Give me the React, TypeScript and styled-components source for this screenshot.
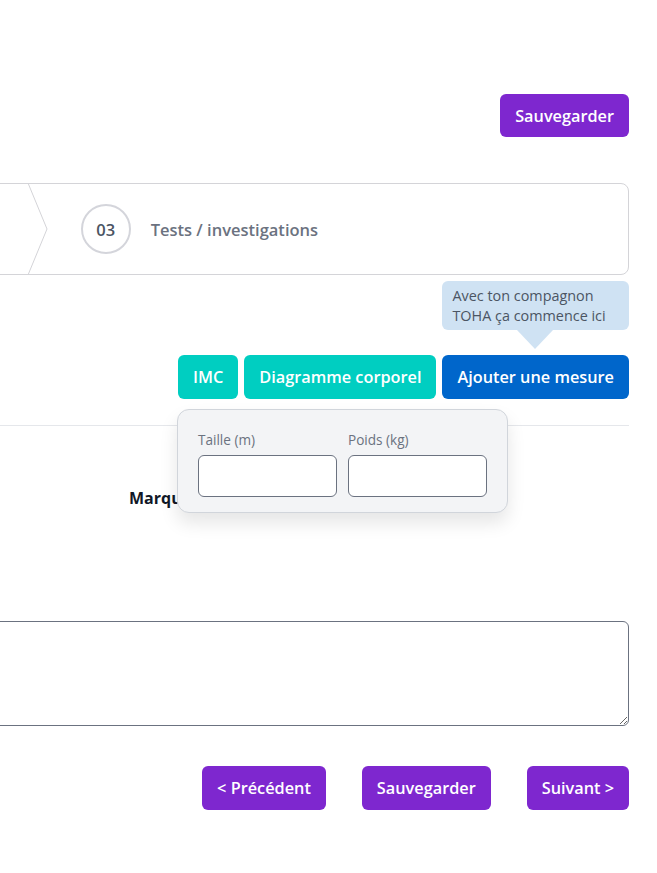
import React from "react";
import styled, { createGlobalStyle } from "styled-components";

const Global = createGlobalStyle`
  html, body { margin: 0; padding: 0; background: #ffffff; }
  body { font-family: "Open Sans", "Noto Sans", sans-serif; color: #111827; overflow: hidden; }
  * { box-sizing: border-box; }
`;

const Viewport = styled.div`
  display: flex;
  justify-content: flex-end;
  padding-right: 28px;
  overflow: hidden;
  min-height: 873px;
`;

const Content = styled.div`
  flex: 0 0 1803px;
  width: 1803px;
  display: flex;
  flex-direction: column;
`;

type Variant = "purple" | "teal" | "blue";

const colors: Record<Variant, string> = {
  purple: "#7e27cf",
  teal: "#00cec1",
  blue: "#0066cb",
};

const Button = styled.button<{ $variant: Variant }>`
  height: 44px;
  padding: 0 15px;
  border: none;
  border-radius: 6px;
  background: ${(p) => colors[p.$variant]};
  color: #ffffff;
  font-family: inherit;
  font-size: 16.3px;
  font-weight: 600;
  white-space: nowrap;
  cursor: pointer;
`;

const TopBar = styled.div`
  display: flex;
  justify-content: flex-end;
  padding-top: 94px;
  ${Button} { height: 43px; }
`;

const Stepper = styled.div`
  margin-top: 46px;
  height: 92px;
  display: flex;
  border: 1px solid #d4d4d8;
  border-radius: 8px;
  overflow: hidden;
`;

const Step = styled.div`
  flex: 1;
  display: flex;
  align-items: center;
`;

const Chevron = styled.svg`
  align-self: stretch;
  width: 20px;
  flex: none;
`;

const StepCircle = styled.div`
  width: 50px;
  height: 50px;
  flex: none;
  margin-left: 33px;
  border: 2px solid #d4d5db;
  border-radius: 50%;
  display: flex;
  align-items: center;
  justify-content: center;
  font-size: 16.5px;
  font-weight: 600;
  color: #4b5563;
`;

const StepLabel = styled.span`
  margin-left: 20px;
  font-size: 16.5px;
  font-weight: 600;
  color: #6b7280;
`;

const ActionsRow = styled.div`
  margin-top: 80px;
  display: flex;
  justify-content: flex-end;
`;

const ActionsGroup = styled.div`
  position: relative;
  display: flex;
  gap: 6px;
`;

const TipWrap = styled.div`
  position: relative;
  display: flex;
`;

const Tooltip = styled.div`
  position: absolute;
  left: 0;
  right: 0;
  bottom: calc(100% + 25px);
  padding: 5px 10px 4px;
  background: #cfe2f3;
  border-radius: 6px;
  font-size: 14.4px;
  line-height: 20px;
  color: #4b5563;
  &::after {
    content: "";
    position: absolute;
    top: 100%;
    left: 75px;
    border-left: 18px solid transparent;
    border-right: 18px solid transparent;
    border-top: 19px solid #cfe2f3;
  }
`;

const Popover = styled.div`
  position: absolute;
  top: calc(100% + 10px);
  left: -1px;
  width: 331px;
  padding: 21px 20px 15px 20px;
  background: #f3f4f6;
  border: 1px solid #d1d5db;
  border-radius: 12px;
  box-shadow: 0 10px 18px rgba(0, 0, 0, 0.1);
  display: grid;
  grid-template-columns: 139px 139px;
  column-gap: 11px;
  z-index: 2;
`;

const Field = styled.label`
  display: flex;
  flex-direction: column;
  gap: 6px;
`;

const FieldLabel = styled.span`
  font-size: 13.6px;
  line-height: 18px;
  color: #6b7280;
`;

const Input = styled.input`
  height: 42px;
  width: 100%;
  border: 1px solid #6b7280;
  border-radius: 6px;
  background: #ffffff;
  font-family: inherit;
`;

const Divider = styled.hr`
  margin: 26px 0 0;
  border: none;
  border-top: 1px solid #e5e7eb;
`;

const LabelRow = styled.div`
  margin-top: 60px;
  display: flex;
  justify-content: flex-end;
`;

const SectionLabel = styled.div`
  width: 500px;
  font-size: 16px;
  line-height: 24px;
  font-weight: 700;
  color: #111827;
`;

const TextArea = styled.textarea`
  margin-top: 111px;
  height: 105px;
  width: 100%;
  border: 1px solid #6b7280;
  border-radius: 6px;
  font-family: inherit;
  resize: vertical;
`;

const Footer = styled.div`
  margin-top: 40px;
  display: flex;
  justify-content: flex-end;
  gap: 36px;
`;

function Separator() {
  return (
    <Chevron viewBox="0 0 20 90" preserveAspectRatio="none">
      <polyline
        points="0,-1 19,45 0,91"
        fill="none"
        stroke="#d4d4d8"
        strokeWidth="1"
        vectorEffect="non-scaling-stroke"
      />
    </Chevron>
  );
}

export default function App() {
  return (
    <>
      <Global />
      <Viewport>
        <Content>
          <TopBar>
            <Button $variant="purple">Sauvegarder</Button>
          </TopBar>

          <Stepper>
            <Step />
            <Step>
              <Separator />
            </Step>
            <Step>
              <Separator />
              <StepCircle>03</StepCircle>
              <StepLabel>Tests / investigations</StepLabel>
            </Step>
          </Stepper>

          <ActionsRow>
            <ActionsGroup>
              <Button $variant="teal">IMC</Button>
              <Button $variant="teal">Diagramme corporel</Button>
              <TipWrap>
                <Tooltip>
                  Avec ton compagnon
                  <br />
                  TOHA ça commence ici
                </Tooltip>
                <Button $variant="blue">Ajouter une mesure</Button>
              </TipWrap>
              <Popover>
                <Field>
                  <FieldLabel>Taille (m)</FieldLabel>
                  <Input type="text" />
                </Field>
                <Field>
                  <FieldLabel>Poids (kg)</FieldLabel>
                  <Input type="text" />
                </Field>
              </Popover>
            </ActionsGroup>
          </ActionsRow>

          <Divider />

          <LabelRow>
            <SectionLabel>Marqueurs biologiques</SectionLabel>
          </LabelRow>

          <TextArea />

          <Footer>
            <Button $variant="purple">&lt; Précédent</Button>
            <Button $variant="purple">Sauvegarder</Button>
            <Button $variant="purple">Suivant &gt;</Button>
          </Footer>
        </Content>
      </Viewport>
    </>
  );
}
